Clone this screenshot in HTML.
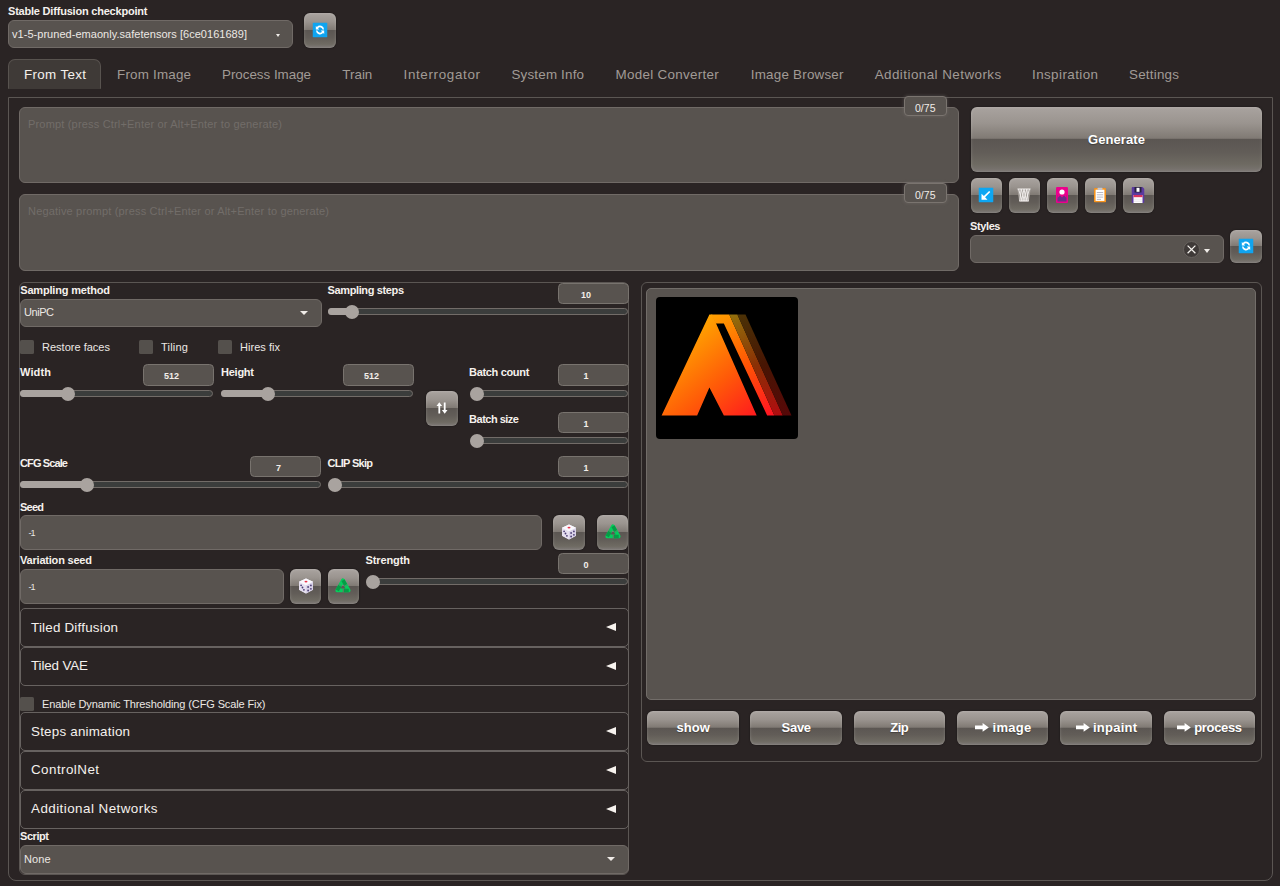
<!DOCTYPE html>
<html><head><meta charset="utf-8"><title>Stable Diffusion</title>
<style>
*{box-sizing:border-box;margin:0;padding:0}
html,body{width:1280px;height:886px;overflow:hidden;background:#2a2424;font-family:"Liberation Sans",sans-serif;color:#f3efeb}
.a,.t,.fld,.num,.btn,.trk,.fill,.th,.cb,.acc,.tok{position:absolute}
.t{white-space:nowrap}
.fld{background:#58534f;border:1px solid #706a66;border-radius:6px}
.num{background:#58534f;border:1px solid #78736e;border-radius:4.5px;font-size:9px;font-weight:bold;text-align:center;color:#f3efeb;padding-right:14px}
.tok{width:42.5px;height:19.5px;background:#58534f;border:1px solid #7a746f;border-radius:4px;box-shadow:0 0 3px 1px rgba(122,116,111,.3);font-size:10.5px;line-height:22.5px;text-align:center;color:#f0ece8}
.btn{border-radius:6px;background:linear-gradient(#a9a39f 0%,#9a948f 25%,#807a74 48%,#5b5652 50%,#625d58 70%,#6e6a62 88%,#7b7673 100%);box-shadow:inset 0 0 3px rgba(255,255,255,.22),0 0 2px rgba(0,0,0,.5)}
.btn svg{position:absolute;left:50%;top:calc(50% - .8px);transform:translate(-50%,-50%)}
.trk{height:7px;border:1px solid #726c68;border-radius:4px;background:#3b3d3c}
.fill{height:7px;border-radius:4px;background:#a9a39f}
.th{width:14px;height:14px;border-radius:50%;background:#a9a39f}
.cb{background:#54504c;border-radius:1.5px}
.acc{border:1px solid #676260;border-radius:5px}
.acc b{position:absolute;right:12.5px;top:14px;width:0;height:0;border-top:4.75px solid transparent;border-bottom:4.75px solid transparent;border-right:10.5px solid #f7f3ef}
.gb{top:711px;height:34.5px;width:92px;font-weight:bold;font-size:13px;line-height:33px;text-align:center;color:#fff;text-shadow:0 1px 1px rgba(0,0,0,.35);white-space:nowrap}
</style></head><body>
<div class="fld" style="left:8px;top:20px;width:284.5px;height:28px;"></div>
<div class="a" style="left:275.5px;top:33.5px;width:0;height:0;border-left:2.5px solid transparent;border-right:2.5px solid transparent;border-top:3px solid #f0ece8"></div>
<div class="btn" style="left:304px;top:13px;width:32px;height:35px;"><svg width="15" height="15" viewBox="0 0 14 14" style="margin-top:.5px"><rect width="14" height="14" rx="1.2" fill="#10a4ef"/><path transform="translate(14,0) scale(-1,1)" d="M3.2 6.5a3.8 3.8 0 0 1 6.7-2.2l1-1v3.2H7.7l1.1-1.1A2.4 2.4 0 0 0 4.6 6.5zM10.8 7.5a3.8 3.8 0 0 1-6.7 2.2l-1 1V7.5h3.2L5.2 8.6a2.4 2.4 0 0 0 4.2-1.1z" fill="#fff"/></svg></div>
<div class="a" style="left:8px;top:59px;width:93.2px;height:30px;background:#3f3a37;border:1px solid #58534f;border-bottom-color:#3f3a37;border-radius:7px 7px 0 0"></div>
<div class="a" style="left:8px;top:97px;width:1264.5px;height:784px;border:1px solid #5b5653;border-radius:0 0 8px 8px"></div>
<div class="fld" style="left:19px;top:107px;width:939.5px;height:76px;"></div>
<div class="fld" style="left:19px;top:194px;width:939.5px;height:77px;"></div>
<div class="tok" style="left:904px;top:96px">0/75</div>
<div class="tok" style="left:904px;top:183px">0/75</div>
<div class="btn" style="left:970.5px;top:107px;width:291px;height:65px;border-radius:6px"></div>
<div class="btn" style="left:970.5px;top:178.3px;width:31.5px;height:34.7px;"><svg width="15" height="15" viewBox="0 0 15 15"><rect width="15" height="15" rx="1" fill="#0da6f2"/><path d="M10.6 3.4L11.8 4.6L6.6 9.8L9 12.2H3V6.2L5.4 8.6Z" fill="#fff"/></svg></div>
<div class="btn" style="left:1008.5px;top:178.3px;width:31.5px;height:34.7px;"><svg width="14" height="14" viewBox="0 0 14 14"><path d="M0.3 0.5H13.7L11.8 13.5H2.2Z" fill="#a5a09b"/><g stroke="#f4f1ef" stroke-width="0.9" fill="none"><path d="M0.5 1H13.5M2.4 13H11.6"/><path d="M1.5 1L5.2 13M4.2 1L7.4 13M7 1L9.4 13M9.8 1L11.2 13M12.5 1L8.8 13M9.8 1L6.6 13M7 1L4.6 13M4.2 1L2.8 13"/></g></svg></div>
<div class="btn" style="left:1046.5px;top:178.3px;width:31.5px;height:34.7px;"><svg width="12" height="16" viewBox="0 0 12 16"><rect width="12" height="16" rx="1.2" fill="#ec008c"/><rect x="1.5" y="8" width="9" height="6.5" fill="#6b2d86"/><path d="M1.5 11L4 8.5L6 10.5L8 8.5L10.5 11V8H1.5Z" fill="#ec008c"/><circle cx="6" cy="5" r="2.6" fill="#fff"/></svg></div>
<div class="btn" style="left:1084.5px;top:178.3px;width:31.5px;height:34.7px;"><svg width="12" height="15" viewBox="0 0 12 15"><rect x="0" y="0.5" width="12" height="14.5" rx="1.2" fill="#f7941d"/><rect x="1.6" y="2.2" width="8.8" height="11.2" fill="#fff"/><rect x="3.5" y="0" width="5" height="2.4" rx=".8" fill="#c8c8d0"/><g stroke="#b9b9c6" stroke-width="1"><path d="M2.8 5H9.2M2.8 7.3H9.2M2.8 9.6H9.2M2.8 11.9H7"/></g></svg></div>
<div class="btn" style="left:1122.5px;top:178.3px;width:31.5px;height:34.7px;"><svg width="13" height="16" viewBox="0 0 13 16"><path d="M0 1.2Q0 0 1.2 0H11L13 2V14.8Q13 16 11.8 16H1.2Q0 16 0 14.8Z" fill="#5b3aa0"/><rect x="3" y="0" width="7" height="5.5" fill="#2a2140"/><rect x="5" y="0.8" width="3" height="4" fill="#fff"/><rect x="2" y="8" width="9" height="8" fill="#fff"/><rect x="2" y="8" width="9" height="2.2" fill="#d8345f"/><path d="M2.5 12.2H10.5M2.5 14.2H10.5" stroke="#e6dfe6" stroke-width=".8"/></svg></div>
<div class="fld" style="left:970px;top:235px;width:254px;height:28px;"></div>
<div class="a" style="left:1182.5px;top:241px;width:17px;height:17px;border-radius:50%;border:1px solid #67625e;background:#3f3a38"><svg width="15" height="15" viewBox="0 0 15 15" style="position:absolute;left:0;top:0"><path d="M3.6 3.6L11.4 11.2M11.4 3.6L3.6 11.2" stroke="#f5f2ee" stroke-width="1.25"/></svg></div>
<div class="a" style="left:1203.8px;top:248.5px;width:0;height:0;border-left:3.7px solid transparent;border-right:3.7px solid transparent;border-top:4px solid #f0ece8"></div>
<div class="btn" style="left:1230px;top:229.5px;width:31.5px;height:33.5px;"><svg width="15" height="15" viewBox="0 0 14 14" style="margin-top:.5px"><rect width="14" height="14" rx="1.2" fill="#10a4ef"/><path transform="translate(14,0) scale(-1,1)" d="M3.2 6.5a3.8 3.8 0 0 1 6.7-2.2l1-1v3.2H7.7l1.1-1.1A2.4 2.4 0 0 0 4.6 6.5zM10.8 7.5a3.8 3.8 0 0 1-6.7 2.2l-1 1V7.5h3.2L5.2 8.6a2.4 2.4 0 0 0 4.2-1.1z" fill="#fff"/></svg></div>
<div class="a" style="left:19px;top:281.5px;width:610.3px;height:593px;border:1px solid #5b5653;border-radius:6px"></div>
<div class="fld" style="left:20px;top:298.5px;width:302px;height:28.5px;"></div>
<div class="a" style="left:299.5px;top:311px;width:0;height:0;border-left:4px solid transparent;border-right:4px solid transparent;border-top:4px solid #f0ece8"></div>
<div class="num" style="left:557.5px;top:282.5px;width:71px;height:21.5px;line-height:22px">10</div>
<div class="trk" style="left:327.5px;top:308px;width:300.5px"></div>
<div class="fill" style="left:327.5px;top:308px;width:24px"></div>
<div class="th" style="left:344.5px;top:304.5px"></div>
<div class="cb" style="left:20.3px;top:339.7px;width:14px;height:14px;"></div>
<div class="cb" style="left:139.3px;top:339.7px;width:14px;height:14px;"></div>
<div class="cb" style="left:218.3px;top:339.7px;width:14px;height:14px;"></div>
<div class="num" style="left:143px;top:364.3px;width:71px;height:21.5px;line-height:22px">512</div>
<div class="trk" style="left:20px;top:390px;width:193px"></div>
<div class="fill" style="left:20px;top:390px;width:48px"></div>
<div class="th" style="left:61px;top:386.5px"></div>
<div class="num" style="left:343px;top:364.3px;width:71px;height:21.5px;line-height:22px">512</div>
<div class="trk" style="left:221px;top:390px;width:192px"></div>
<div class="fill" style="left:221px;top:390px;width:46.5px"></div>
<div class="th" style="left:260.5px;top:386.5px"></div>
<div class="btn" style="left:425.7px;top:391.3px;width:32px;height:35px;"><svg width="12" height="12" viewBox="0 0 12 12"><path d="M3.3 0.3L0.5 4h1.9v7.5h1.8V4h1.9zM8.7 11.7L5.9 8h1.9V0.5h1.8v7.5h1.9z" fill="#fff"/></svg></div>
<div class="num" style="left:557.5px;top:364.3px;width:71px;height:21.5px;line-height:22px">1</div>
<div class="trk" style="left:469.5px;top:390px;width:158.5px"></div>
<div class="th" style="left:469.5px;top:386.5px"></div>
<div class="num" style="left:557.5px;top:411.5px;width:71px;height:21.5px;line-height:22px">1</div>
<div class="trk" style="left:469.5px;top:437px;width:158.5px"></div>
<div class="th" style="left:469.5px;top:433.5px"></div>
<div class="num" style="left:250px;top:455.5px;width:71px;height:21.5px;line-height:22px">7</div>
<div class="trk" style="left:20px;top:481px;width:301px"></div>
<div class="fill" style="left:20px;top:481px;width:66.5px"></div>
<div class="th" style="left:79.5px;top:477.5px"></div>
<div class="num" style="left:557.5px;top:455.5px;width:71px;height:21.5px;line-height:22px">1</div>
<div class="trk" style="left:327.5px;top:481px;width:300.5px"></div>
<div class="th" style="left:327.5px;top:477.5px"></div>
<div class="fld" style="left:20px;top:515px;width:521.5px;height:35px;"></div>
<div class="btn" style="left:553.3px;top:515px;width:31.4px;height:35px;"><svg width="15" height="16" viewBox="0 0 15 16"><path d="M7.5 0.5L14.5 3.8V11.8L7.5 15.5L0.5 11.8V3.8Z" fill="#efeaf6"/><path d="M7.5 7.2L14.5 3.8V11.8L7.5 15.5Z" fill="#d9d2e8"/><path d="M7.5 7.2L0.5 3.8V11.8L7.5 15.5Z" fill="#e6e0f0"/><path d="M7.5 0.5L14.5 3.8L7.5 7.2L0.5 3.8Z" fill="#faf8fd"/><ellipse cx="7.5" cy="3.6" rx="1.5" ry=".9" fill="#e8334a"/><g fill="#4b3d73"><circle cx="2.6" cy="7.3" r=".9"/><circle cx="5.4" cy="11.8" r=".9"/><circle cx="4" cy="9.5" r=".9"/><circle cx="9.6" cy="9" r=".9"/><circle cx="12.4" cy="7.4" r=".9"/><circle cx="9.6" cy="12.5" r=".9"/><circle cx="12.4" cy="10.8" r=".9"/></g></svg></div>
<div class="btn" style="left:597px;top:515px;width:31.2px;height:35px;"><svg width="17" height="18" viewBox="0 0 16 16"><path d="M8 2.6L13.4 12.2H2.6Z" fill="none" stroke="#07cc5c" stroke-width="3.5" stroke-linejoin="round"/><path d="M8 2.6L10.4 6.9M13.4 12.2H8.6M2.6 12.2L5 7.9" fill="none" stroke="#059c46" stroke-width="3.3" stroke-linecap="butt"/><path d="M10.1 7.7L11.6 6.9M8.3 10.4V14M5.6 7.6L4.1 6.8" stroke="#6f6a64" stroke-width="0.9"/></svg></div>
<div class="fld" style="left:20px;top:569px;width:263.5px;height:35px;"></div>
<div class="btn" style="left:290px;top:569px;width:31.4px;height:35px;"><svg width="15" height="16" viewBox="0 0 15 16"><path d="M7.5 0.5L14.5 3.8V11.8L7.5 15.5L0.5 11.8V3.8Z" fill="#efeaf6"/><path d="M7.5 7.2L14.5 3.8V11.8L7.5 15.5Z" fill="#d9d2e8"/><path d="M7.5 7.2L0.5 3.8V11.8L7.5 15.5Z" fill="#e6e0f0"/><path d="M7.5 0.5L14.5 3.8L7.5 7.2L0.5 3.8Z" fill="#faf8fd"/><ellipse cx="7.5" cy="3.6" rx="1.5" ry=".9" fill="#e8334a"/><g fill="#4b3d73"><circle cx="2.6" cy="7.3" r=".9"/><circle cx="5.4" cy="11.8" r=".9"/><circle cx="4" cy="9.5" r=".9"/><circle cx="9.6" cy="9" r=".9"/><circle cx="12.4" cy="7.4" r=".9"/><circle cx="9.6" cy="12.5" r=".9"/><circle cx="12.4" cy="10.8" r=".9"/></g></svg></div>
<div class="btn" style="left:327.5px;top:569px;width:31.4px;height:35px;"><svg width="17" height="18" viewBox="0 0 16 16"><path d="M8 2.6L13.4 12.2H2.6Z" fill="none" stroke="#07cc5c" stroke-width="3.5" stroke-linejoin="round"/><path d="M8 2.6L10.4 6.9M13.4 12.2H8.6M2.6 12.2L5 7.9" fill="none" stroke="#059c46" stroke-width="3.3" stroke-linecap="butt"/><path d="M10.1 7.7L11.6 6.9M8.3 10.4V14M5.6 7.6L4.1 6.8" stroke="#6f6a64" stroke-width="0.9"/></svg></div>
<div class="num" style="left:557.5px;top:552.5px;width:71px;height:21.5px;line-height:22px">0</div>
<div class="trk" style="left:365.5px;top:578px;width:262.5px"></div>
<div class="th" style="left:365.5px;top:574.5px"></div>
<div class="acc" style="left:19.6px;top:608px;width:609.7px;height:38.6px;"><b></b></div>
<div class="acc" style="left:19.6px;top:647px;width:609.7px;height:38.6px;"><b></b></div>
<div class="acc" style="left:19.6px;top:712px;width:609.7px;height:38.6px;"><b></b></div>
<div class="acc" style="left:19.6px;top:751px;width:609.7px;height:38.6px;"><b></b></div>
<div class="acc" style="left:19.6px;top:790px;width:609.7px;height:38.6px;"><b></b></div>
<div class="cb" style="left:20.3px;top:696.5px;width:14px;height:14px;"></div>
<div class="fld" style="left:20px;top:845px;width:609px;height:28.5px;"></div>
<div class="a" style="left:606.5px;top:857px;width:0;height:0;border-left:4px solid transparent;border-right:4px solid transparent;border-top:4px solid #f0ece8"></div>
<div class="a" style="left:640.5px;top:281.5px;width:621.5px;height:480.5px;border:1px solid #5b5653;border-radius:6px"></div>
<div class="a" style="left:646.3px;top:287.5px;width:609.7px;height:412.3px;background:#58534f;border:1.5px solid #726d69;border-radius:5px"></div>
<div class="a" style="left:656px;top:297px;width:142px;height:142px;background:#000;border-radius:4px;overflow:hidden"><svg width="142" height="142" viewBox="35 38 785 787" style="position:absolute;left:0;top:0"><defs>
<linearGradient id="g1" gradientUnits="userSpaceOnUse" x1="180" y1="260" x2="560" y2="720"><stop offset="0" stop-color="#ffa400"/><stop offset=".55" stop-color="#ff5a08"/><stop offset="1" stop-color="#ff1a1e"/></linearGradient>
<linearGradient id="g2" gradientUnits="userSpaceOnUse" x1="380" y1="135" x2="670" y2="695"><stop offset="0" stop-color="#ff9c00"/><stop offset=".5" stop-color="#ff5505"/><stop offset="1" stop-color="#ff1522"/></linearGradient>
<linearGradient id="g3" gradientUnits="userSpaceOnUse" x1="460" y1="135" x2="715" y2="695"><stop offset="0" stop-color="#94700c"/><stop offset=".5" stop-color="#8a3005"/><stop offset="1" stop-color="#b00c10"/></linearGradient>
<linearGradient id="g4" gradientUnits="userSpaceOnUse" x1="505" y1="135" x2="760" y2="695"><stop offset="0" stop-color="#4c3206"/><stop offset=".5" stop-color="#471503"/><stop offset="1" stop-color="#560808"/></linearGradient></defs>
<path d="M65 695L330 135L345 135L592 695L410 695L330 540L262 695Z" fill="url(#g1)"/>
<path d="M340 135L440 135L690 695L650 695L410 185L364 185Z" fill="url(#g2)"/>
<path d="M440 135L485 135L737 695L690 695Z" fill="url(#g3)"/>
<path d="M485 135L530 135L785 695L737 695Z" fill="url(#g4)"/>
</svg></div>
<div class="btn" style="left:647px;top:710.8px;width:91.5px;height:34px;"></div>
<div class="btn" style="left:750.2px;top:710.8px;width:92px;height:34px;"></div>
<div class="btn" style="left:853.7px;top:710.8px;width:91.5px;height:34px;"></div>
<div class="btn" style="left:957px;top:710.8px;width:91.3px;height:34px;"></div>
<div class="btn" style="left:1060px;top:710.8px;width:92px;height:34px;"></div>
<div class="btn" style="left:1163.7px;top:710.8px;width:91.8px;height:34px;"></div>
<svg class="a" style="left:975.3px;top:723.3px" width="14" height="9" viewBox="0 0 14 9"><path d="M0 2.6H7.6V0L13.8 4.4L7.6 8.8V6.2H0Z" fill="#fff"/></svg>
<svg class="a" style="left:1075.8px;top:723.3px" width="14" height="9" viewBox="0 0 14 9"><path d="M0 2.6H7.6V0L13.8 4.4L7.6 8.8V6.2H0Z" fill="#fff"/></svg>
<svg class="a" style="left:1176.8px;top:723.3px" width="14" height="9" viewBox="0 0 14 9"><path d="M0 2.6H7.6V0L13.8 4.4L7.6 8.8V6.2H0Z" fill="#fff"/></svg>
<div class="t" style="left:8px;top:5.69px;font-size:11px;line-height:11px;color:#f5f1ed;font-weight:bold;letter-spacing:-0.206px;">Stable Diffusion checkpoint</div>
<div class="t" style="left:12px;top:28.89px;font-size:11px;line-height:11px;color:#ece8e4;letter-spacing:0.037px;">v1-5-pruned-emaonly.safetensors [6ce0161689]</div>
<div class="t" style="left:24px;top:68.06px;font-size:13.4px;line-height:13.4px;color:#f5f1ed;letter-spacing:0.340px;">From Text</div>
<div class="t" style="left:117px;top:68.06px;font-size:13.4px;line-height:13.4px;color:#a19b96;letter-spacing:0.201px;">From Image</div>
<div class="t" style="left:222px;top:68.06px;font-size:13.4px;line-height:13.4px;color:#a19b96;letter-spacing:-0.026px;">Process Image</div>
<div class="t" style="left:342.3px;top:68.06px;font-size:13.4px;line-height:13.4px;color:#a19b96;">Train</div>
<div class="t" style="left:403.5px;top:68.06px;font-size:13.4px;line-height:13.4px;color:#a19b96;letter-spacing:0.661px;">Interrogator</div>
<div class="t" style="left:511.5px;top:68.06px;font-size:13.4px;line-height:13.4px;color:#a19b96;letter-spacing:0.180px;">System Info</div>
<div class="t" style="left:615.6px;top:68.06px;font-size:13.4px;line-height:13.4px;color:#a19b96;letter-spacing:0.300px;">Model Converter</div>
<div class="t" style="left:750.8px;top:68.06px;font-size:13.4px;line-height:13.4px;color:#a19b96;letter-spacing:0.221px;">Image Browser</div>
<div class="t" style="left:874.7px;top:68.06px;font-size:13.4px;line-height:13.4px;color:#a19b96;letter-spacing:0.453px;">Additional Networks</div>
<div class="t" style="left:1032px;top:68.06px;font-size:13.4px;line-height:13.4px;color:#a19b96;letter-spacing:0.420px;">Inspiration</div>
<div class="t" style="left:1129px;top:68.06px;font-size:13.4px;line-height:13.4px;color:#a19b96;letter-spacing:0.230px;">Settings</div>
<div class="t" style="left:28px;top:118.89px;font-size:11px;line-height:11px;color:#726d69;letter-spacing:0.180px;">Prompt (press Ctrl+Enter or Alt+Enter to generate)</div>
<div class="t" style="left:28px;top:206.29px;font-size:11px;line-height:11px;color:#726d69;letter-spacing:0.182px;">Negative prompt (press Ctrl+Enter or Alt+Enter to generate)</div>
<div class="t" style="left:1088px;top:132.60px;font-size:13px;line-height:13px;color:#fff;font-weight:bold;letter-spacing:0.089px;text-shadow:0 1px 1px rgba(0,0,0,.35)">Generate</div>
<div class="t" style="left:970px;top:221.19px;font-size:11px;line-height:11px;color:#f5f1ed;font-weight:bold;letter-spacing:-0.384px;">Styles</div>
<div class="t" style="left:20.25px;top:285.09px;font-size:11px;line-height:11px;color:#f5f1ed;font-weight:bold;letter-spacing:-0.181px;">Sampling method</div>
<div class="t" style="left:24px;top:306.94px;font-size:11px;line-height:11px;color:#ece8e4;letter-spacing:-0.449px;">UniPC</div>
<div class="t" style="left:327.5px;top:285.09px;font-size:11px;line-height:11px;color:#f5f1ed;font-weight:bold;letter-spacing:-0.369px;">Sampling steps</div>
<div class="t" style="left:42px;top:341.94px;font-size:11px;line-height:11px;color:#ece8e4;letter-spacing:0.010px;">Restore faces</div>
<div class="t" style="left:161px;top:341.94px;font-size:11px;line-height:11px;color:#ece8e4;letter-spacing:0.222px;">Tiling</div>
<div class="t" style="left:240px;top:341.94px;font-size:11px;line-height:11px;color:#ece8e4;letter-spacing:0.033px;">Hires fix</div>
<div class="t" style="left:20px;top:366.99px;font-size:11px;line-height:11px;color:#f5f1ed;font-weight:bold;letter-spacing:0.137px;">Width</div>
<div class="t" style="left:221px;top:366.99px;font-size:11px;line-height:11px;color:#f5f1ed;font-weight:bold;letter-spacing:-0.247px;">Height</div>
<div class="t" style="left:469.1px;top:366.99px;font-size:11px;line-height:11px;color:#f5f1ed;font-weight:bold;letter-spacing:-0.336px;">Batch count</div>
<div class="t" style="left:469.1px;top:414.29px;font-size:11px;line-height:11px;color:#f5f1ed;font-weight:bold;letter-spacing:-0.502px;">Batch size</div>
<div class="t" style="left:20px;top:458.09px;font-size:11px;line-height:11px;color:#f5f1ed;font-weight:bold;letter-spacing:-0.879px;">CFG Scale</div>
<div class="t" style="left:327.5px;top:458.09px;font-size:11px;line-height:11px;color:#f5f1ed;font-weight:bold;letter-spacing:-0.707px;">CLIP Skip</div>
<div class="t" style="left:20px;top:501.69px;font-size:11px;line-height:11px;color:#f5f1ed;font-weight:bold;letter-spacing:-0.766px;">Seed</div>
<div class="t" style="left:28.5px;top:528.88px;font-size:9px;line-height:9px;color:#ece8e4;letter-spacing:-1.000px;">-1</div>
<div class="t" style="left:20px;top:555.09px;font-size:11px;line-height:11px;color:#f5f1ed;font-weight:bold;letter-spacing:-0.200px;">Variation seed</div>
<div class="t" style="left:28.5px;top:582.88px;font-size:9px;line-height:9px;color:#ece8e4;letter-spacing:-1.000px;">-1</div>
<div class="t" style="left:365.5px;top:555.09px;font-size:11px;line-height:11px;color:#f5f1ed;font-weight:bold;letter-spacing:-0.105px;">Strength</div>
<div class="t" style="left:42px;top:698.69px;font-size:11px;line-height:11px;color:#ece8e4;letter-spacing:-0.118px;">Enable Dynamic Thresholding (CFG Scale Fix)</div>
<div class="t" style="left:20px;top:831.19px;font-size:11px;line-height:11px;color:#f5f1ed;font-weight:bold;letter-spacing:-0.438px;">Script</div>
<div class="t" style="left:24px;top:853.69px;font-size:11px;line-height:11px;color:#ece8e4;letter-spacing:0.068px;">None</div>
<div class="t" style="left:31px;top:620.66px;font-size:13.4px;line-height:13.4px;color:#f5f1ed;letter-spacing:0.206px;">Tiled Diffusion</div>
<div class="t" style="left:31px;top:658.66px;font-size:13.4px;line-height:13.4px;color:#f5f1ed;letter-spacing:-0.131px;">Tiled VAE</div>
<div class="t" style="left:31px;top:724.66px;font-size:13.4px;line-height:13.4px;color:#f5f1ed;letter-spacing:0.212px;">Steps animation</div>
<div class="t" style="left:31px;top:762.66px;font-size:13.4px;line-height:13.4px;color:#f5f1ed;letter-spacing:0.443px;">ControlNet</div>
<div class="t" style="left:31px;top:801.66px;font-size:13.4px;line-height:13.4px;color:#f5f1ed;letter-spacing:0.453px;">Additional Networks</div>
<div class="t" style="left:676.5px;top:721.30px;font-size:13px;line-height:13px;color:#fff;font-weight:bold;letter-spacing:0.022px;text-shadow:0 1px 1px rgba(0,0,0,.3)">show</div>
<div class="t" style="left:781.6px;top:721.30px;font-size:13px;line-height:13px;color:#fff;font-weight:bold;letter-spacing:-0.292px;text-shadow:0 1px 1px rgba(0,0,0,.3)">Save</div>
<div class="t" style="left:890.3px;top:721.30px;font-size:13px;line-height:13px;color:#fff;font-weight:bold;letter-spacing:-0.600px;text-shadow:0 1px 1px rgba(0,0,0,.3)">Zip</div>
<div class="t" style="left:992.5px;top:721.30px;font-size:13px;line-height:13px;color:#fff;font-weight:bold;letter-spacing:0.293px;text-shadow:0 1px 1px rgba(0,0,0,.3)">image</div>
<div class="t" style="left:1093px;top:721.30px;font-size:13px;line-height:13px;color:#fff;font-weight:bold;letter-spacing:0.232px;text-shadow:0 1px 1px rgba(0,0,0,.3)">inpaint</div>
<div class="t" style="left:1194.25px;top:721.30px;font-size:13px;line-height:13px;color:#fff;font-weight:bold;letter-spacing:-0.354px;text-shadow:0 1px 1px rgba(0,0,0,.3)">process</div>
</body></html>
